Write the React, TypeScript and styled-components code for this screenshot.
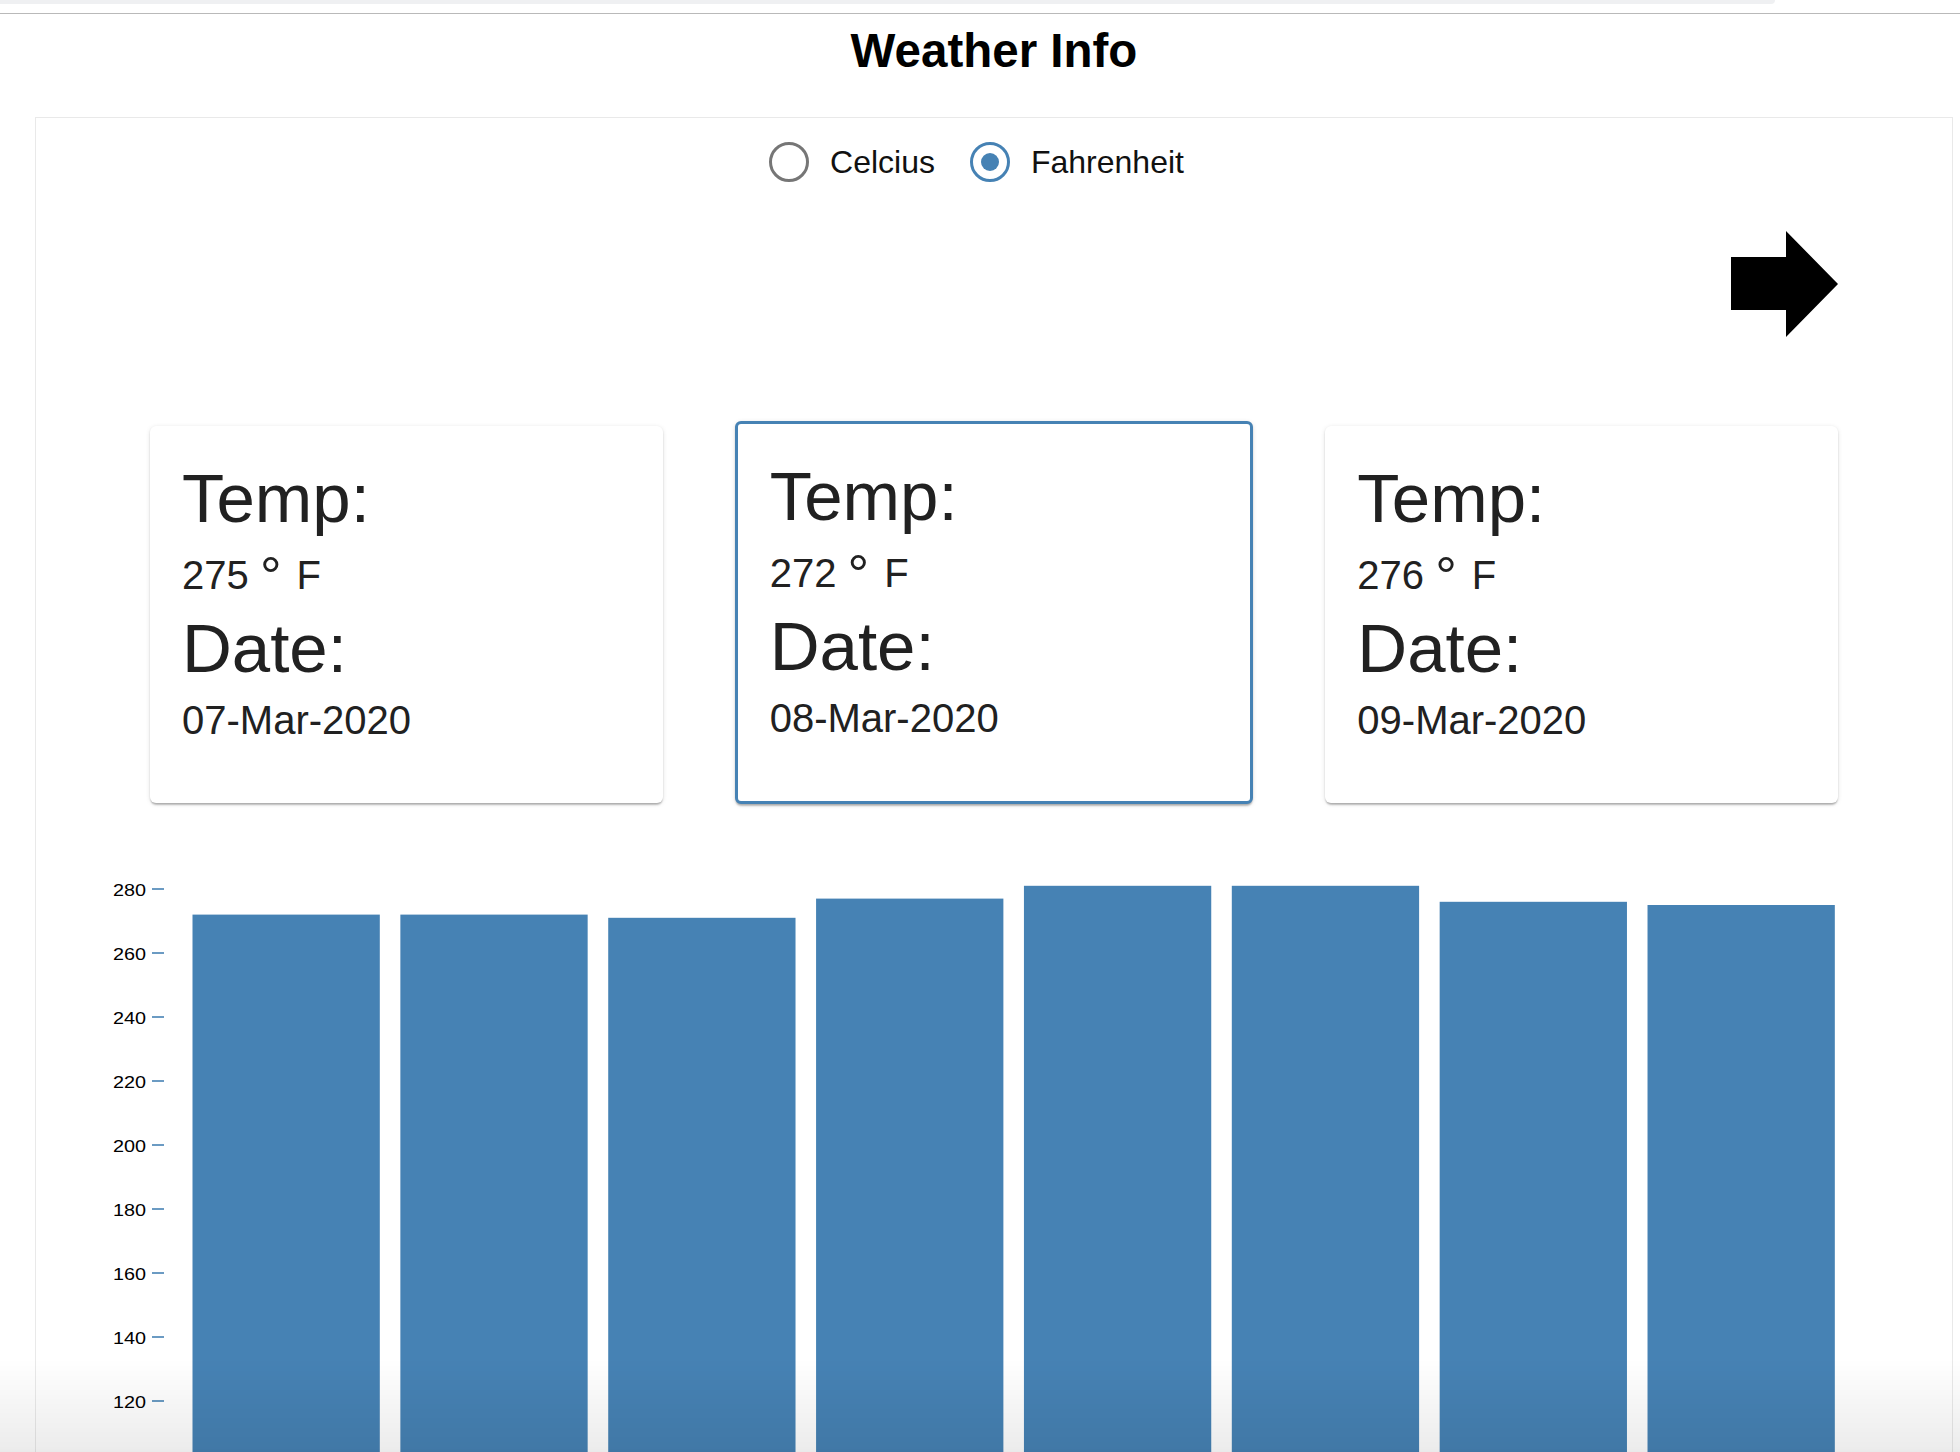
import React from 'react';
import styled, { createGlobalStyle } from 'styled-components';

const GlobalStyle = createGlobalStyle`
  html, body {
    margin: 0;
    padding: 0;
    background: #ffffff;
  }
  body {
    font-family: "Liberation Sans", Arial, Helvetica, sans-serif;
    color: #000000;
  }
`;

const Page = styled.div`
  position: relative;
  height: 100vh;
  overflow: hidden;
`;

const BrowserStrip = styled.div`
  width: 1775px;
  height: 4px;
  background: #eff0f2;
  border-bottom-right-radius: 6px;
`;

const Rule = styled.hr`
  margin: 9px 0 0;
  border: 0;
  height: 1px;
  background: #b9b9b9;
`;

const Main = styled.main`
  padding: 0 7px 0 35px;
`;

const Title = styled.h1`
  margin: 10px 0 0;
  font-size: 47.5px;
  line-height: 54px;
  font-weight: 700;
  text-align: center;
  color: #000;
`;

const Panel = styled.section`
  margin-top: 39px;
  border: 1px solid #e9e9e9;
  border-bottom: none;
`;

const RadioGroup = styled.div`
  display: flex;
  justify-content: center;
  padding-top: 24px;
`;

const RadioLabel = styled.label`
  display: flex;
  align-items: center;
  gap: 21px;
  margin-right: 35px;
  font-size: 32px;
  line-height: 40px;
  color: #111;
  cursor: pointer;
`;

const RadioInput = styled.input`
  appearance: none;
  -webkit-appearance: none;
  margin: 0;
  width: 40px;
  height: 40px;
  box-sizing: border-box;
  border-radius: 50%;
  border: 3px solid #767676;
  display: grid;
  place-content: center;
  cursor: pointer;

  &:checked {
    border-color: #4682b4;
  }
  &:checked::before {
    content: "";
    width: 18px;
    height: 18px;
    border-radius: 50%;
    background: #4682b4;
  }
`;

const ArrowRow = styled.div`
  width: 1688px;
  margin: 49px auto 0;
  display: flex;
  justify-content: flex-end;
`;

const NextButton = styled.button`
  border: 0;
  background: none;
  padding: 0;
  line-height: 0;
  cursor: pointer;
`;

const CardsRow = styled.div`
  width: 1688px;
  margin: 84px auto 0;
  display: flex;
  align-items: flex-start;
  gap: 72px;
`;

const Card = styled.div<{ $selected?: boolean }>`
  flex: 1 1 0;
  background: #fff;
  border-radius: 6px;
  padding: 32px 32px 53px;
  margin-top: ${(p) => (p.$selected ? 0 : 5)}px;
  border: ${(p) => (p.$selected ? '3px solid #4682b4' : '0')};
  box-shadow: 0 3px 2px -1px rgba(0, 0, 0, 0.2), 0 1px 2px 0 rgba(0, 0, 0, 0.12),
    0 1px 5px 0 rgba(0, 0, 0, 0.1);
  color: #212121;
`;

const Heading = styled.div<{ $gap?: number }>`
  font-size: 69px;
  line-height: 82px;
  margin-top: ${(p) => p.$gap ?? 0}px;
`;

const Value = styled.div<{ $gap?: number }>`
  font-size: 40px;
  line-height: 60px;
  margin-top: ${(p) => p.$gap ?? 0}px;
`;

const Deg = styled.span`
  font-size: 54px;
  line-height: 0;
  vertical-align: -6px;
`;

const Chart = styled.svg`
  display: block;
  margin-top: 35px;
`;

const Bar = styled.rect`
  fill: #4682b4;
`;

const TickLine = styled.line`
  stroke: #4682b4;
  stroke-width: 1.6;
`;

const TickLabel = styled.text`
  font-family: "Liberation Sans", Arial, Helvetica, sans-serif;
  font-size: 16.5px;
  fill: #000;
`;

const BottomFade = styled.div`
  position: absolute;
  left: 0;
  right: 0;
  bottom: 0;
  height: 90px;
  background: linear-gradient(to bottom, rgba(0, 0, 0, 0), rgba(0, 0, 0, 0.075));
  border-bottom: 3px solid rgba(0, 0, 0, 0.08);
  pointer-events: none;
`;

const cards = [
  { temp: 275, date: '07-Mar-2020', selected: false },
  { temp: 272, date: '08-Mar-2020', selected: true },
  { temp: 276, date: '09-Mar-2020', selected: false },
];

const temps = [272, 272, 271, 277, 281, 281, 276, 275];
const ticks = [280, 260, 240, 220, 200, 180, 160, 140, 120];

const Y0 = 50;
const PX_PER_UNIT = 3.2;
const yOf = (v: number) => Y0 + (280 - v) * PX_PER_UNIT;
const BAR_X0 = 156.5;
const BAR_STEP = 207.86;
const BAR_W = 187.3;
const CHART_W = 1916;
const CHART_H = 640;

function Arrow() {
  return (
    <svg width="107" height="106" viewBox="0 0 107 106">
      <path d="M0 26 H55 V0 L107 53 L55 106 V79 H0 Z" fill="#000" />
    </svg>
  );
}

export default function App() {
  const [unit, setUnit] = React.useState<'C' | 'F'>('F');
  return (
    <Page>
      <GlobalStyle />
      <BrowserStrip />
      <Rule />
      <Main>
        <Title>Weather Info</Title>
        <Panel>
          <RadioGroup>
            <RadioLabel>
              <RadioInput
                type="radio"
                name="unit"
                checked={unit === 'C'}
                onChange={() => setUnit('C')}
              />
              Celcius
            </RadioLabel>
            <RadioLabel>
              <RadioInput
                type="radio"
                name="unit"
                checked={unit === 'F'}
                onChange={() => setUnit('F')}
              />
              Fahrenheit
            </RadioLabel>
          </RadioGroup>
          <ArrowRow>
            <NextButton aria-label="Next">
              <Arrow />
            </NextButton>
          </ArrowRow>
          <CardsRow>
            {cards.map((c) => (
              <Card key={c.date} $selected={c.selected}>
                <Heading>Temp:</Heading>
                <Value $gap={5}>
                  {c.temp} <Deg>° </Deg>F
                </Value>
                <Heading $gap={3}>Date:</Heading>
                <Value>{c.date}</Value>
              </Card>
            ))}
          </CardsRow>
          <Chart width={CHART_W} height={CHART_H} viewBox={`0 0 ${CHART_W} ${CHART_H}`}>
            {ticks.map((t) => (
              <g key={t} transform={`translate(0, ${yOf(t)})`}>
                <TickLine x1={116} x2={128} y1={0} y2={0} />
                <g transform="translate(110, 0)">
                  <TickLabel transform="scale(1.2, 1)" textAnchor="end" dy="0.4em">
                    {t}
                  </TickLabel>
                </g>
              </g>
            ))}
            {temps.map((v, i) => (
              <Bar
                key={i}
                x={BAR_X0 + i * BAR_STEP}
                y={yOf(v)}
                width={BAR_W}
                height={CHART_H - yOf(v)}
              />
            ))}
          </Chart>
        </Panel>
      </Main>
      <BottomFade />
    </Page>
  );
}
